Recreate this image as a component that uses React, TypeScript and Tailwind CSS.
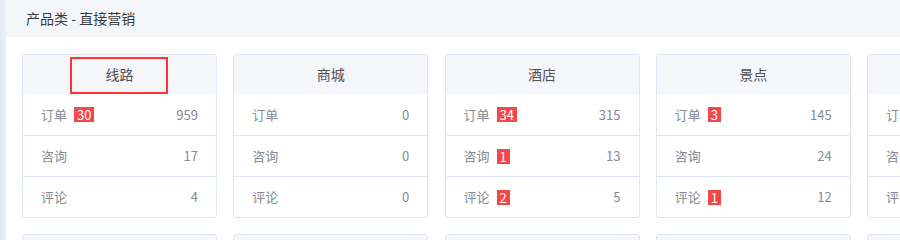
import React from "react";

type Row = { label: string; badge?: number; value: number };
type Card = { title: string; rows: Row[]; marked?: boolean };

const cards: Card[] = [
  {
    title: "线路",
    marked: true,
    rows: [
      { label: "订单", badge: 30, value: 959 },
      { label: "咨询", value: 17 },
      { label: "评论", value: 4 },
    ],
  },
  {
    title: "商城",
    rows: [
      { label: "订单", value: 0 },
      { label: "咨询", value: 0 },
      { label: "评论", value: 0 },
    ],
  },
  {
    title: "酒店",
    rows: [
      { label: "订单", badge: 34, value: 315 },
      { label: "咨询", badge: 1, value: 13 },
      { label: "评论", badge: 2, value: 5 },
    ],
  },
  {
    title: "景点",
    rows: [
      { label: "订单", badge: 3, value: 145 },
      { label: "咨询", value: 24 },
      { label: "评论", badge: 1, value: 12 },
    ],
  },
  {
    title: "签证",
    rows: [
      { label: "订单", value: 6 },
      { label: "咨询", value: 2 },
      { label: "评论", value: 0 },
    ],
  },
];

const more = ["租车", "游轮", "团购", "特产", "门票"];

function StatCard({ card }: { card: Card }) {
  return (
    <div className="relative rounded-[3px] border border-[#dde5f2] bg-white">
      <div className="flex h-[39px] items-center justify-center rounded-t-[3px] bg-[#f4f6fa] text-[14px] text-[#505050]">
        {card.title}
      </div>
      {card.marked && (
        // annotation box around the title
        <div className="absolute left-[47px] top-[2px] h-[37px] w-[98px] border-2 border-[#f33]" />
      )}
      {card.rows.map((r, i) => (
        <div
          key={r.label}
          className={`flex h-[41px] items-center justify-between pl-[18px] pr-[18px] text-[13px] text-[#858a94] ${
            i > 0 ? "border-t border-[#dde5f2]" : ""
          }`}
        >
          <div className="flex items-center">
            <span>{r.label}</span>
            {r.badge !== undefined && (
              <span className="ml-[7px] flex h-[15px] items-center bg-[#f5474a] px-[3px] text-[13px] leading-none text-white">
                {r.badge}
              </span>
            )}
          </div>
          <span>{r.value}</span>
        </div>
      ))}
    </div>
  );
}

export default function App() {
  return (
    <div
      className="flex h-[240px] w-[900px] overflow-hidden bg-white"
      style={{ fontFamily: '"Noto Sans CJK SC", "Noto Sans", sans-serif' }}
    >
      <div className="w-[6px] shrink-0 bg-gradient-to-r from-[#e3e8f1] to-[#edf1f7]" />
      <div className="min-w-0 flex-1">
        <div className="flex h-[37px] items-center bg-[#f4f6fa] pl-[20px] text-[14px] text-[#3a3a3a]">
          产品类 - 直接营销
        </div>
        <div className="grid grid-cols-[repeat(5,195px)] gap-x-[16.25px] gap-y-[16px] pl-[16px] pt-[17px]">
          {cards.map((c) => (
            <StatCard key={c.title} card={c} />
          ))}
          {more.map((t) => (
            <div key={t} className="h-[40px] rounded-[3px] border border-[#dde5f2] bg-[#f4f6fa]" />
          ))}
        </div>
      </div>
    </div>
  );
}
